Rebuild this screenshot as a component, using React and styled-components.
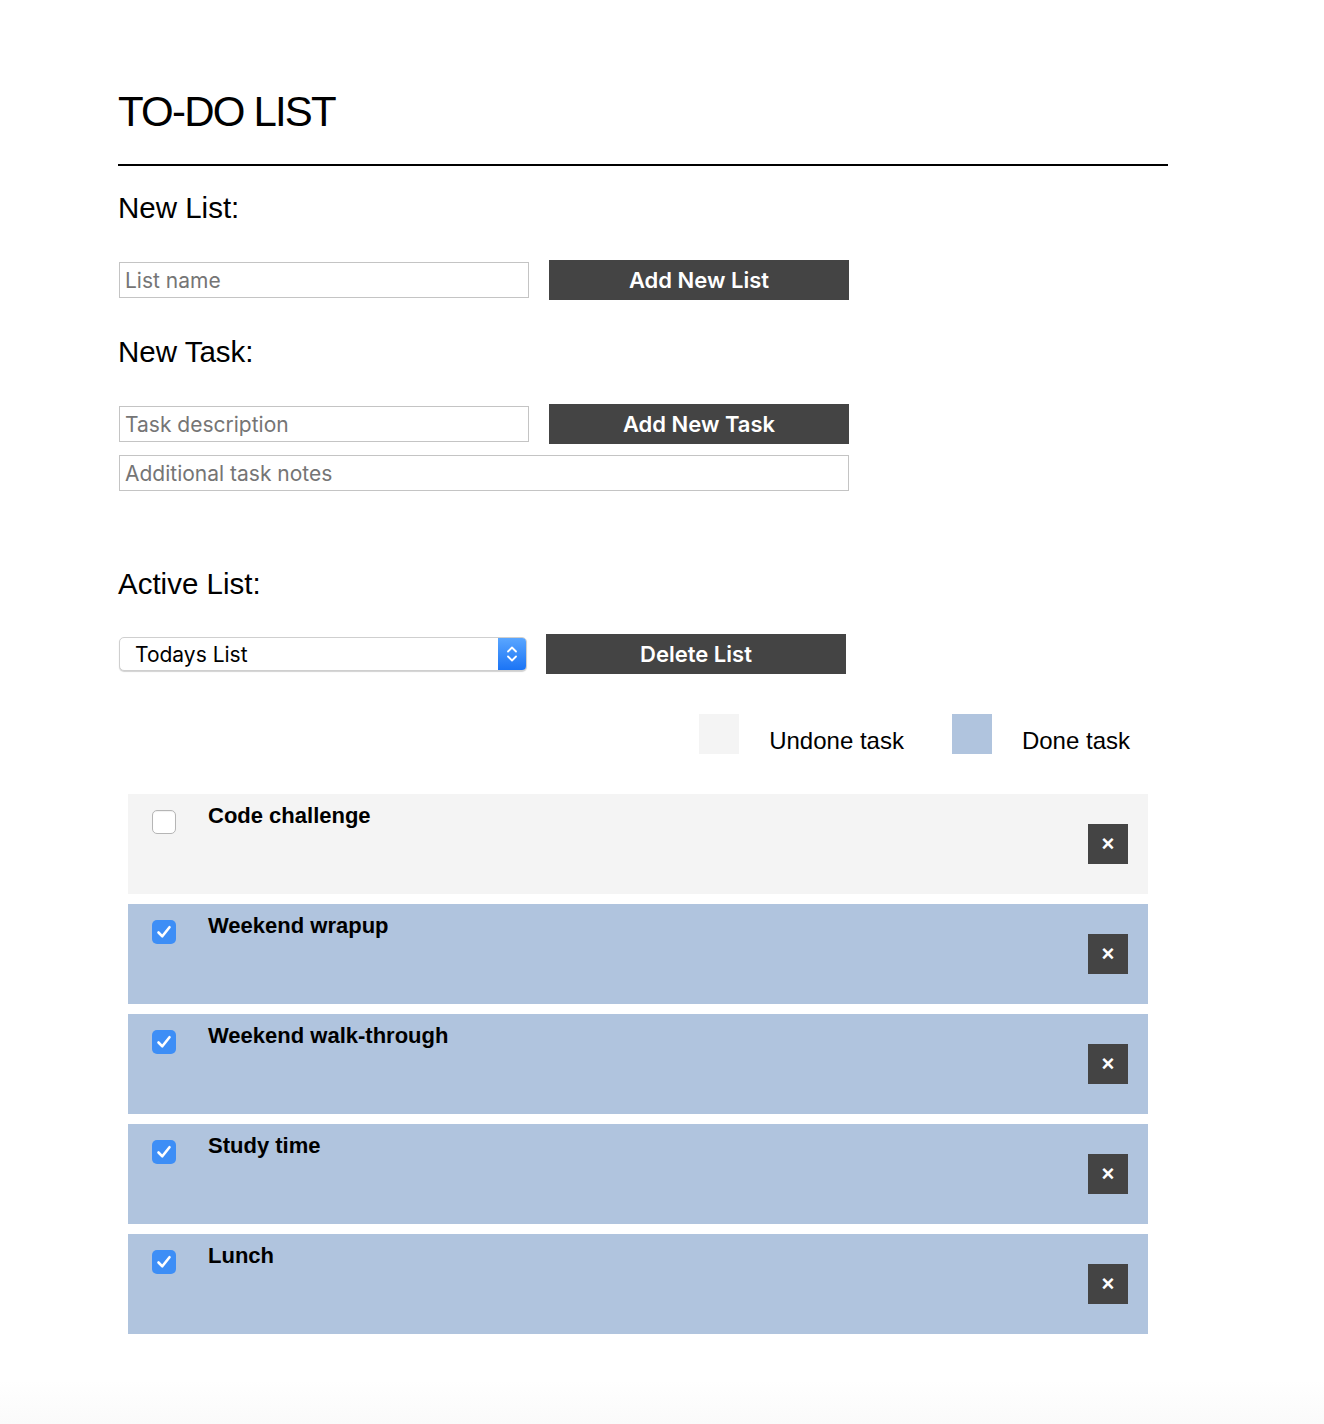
import React from "react";
import styled, { createGlobalStyle } from "styled-components";

const GlobalStyle = createGlobalStyle`
  html {
    min-height: 100%;
    background: linear-gradient(to bottom, #ffffff 1380px, #fafafa 1424px);
  }
  body {
    margin: 0;
    padding: 0;
    font-family: "Liberation Sans", Arial, sans-serif;
    color: #000;
  }
`;

const tasks = [
  { title: "Code challenge", done: false },
  { title: "Weekend wrapup", done: true },
  { title: "Weekend walk-through", done: true },
  { title: "Study time", done: true },
  { title: "Lunch", done: true },
];

export default function App() {
  return (
    <>
      <GlobalStyle />
      <Page>
        <Header>
          <Title>TO-DO LIST</Title>
        </Header>

        <Heading>New List:</Heading>
        <FormRow>
          <TextInput placeholder="List name" />
          <DarkButton>Add New List</DarkButton>
        </FormRow>

        <Heading $top={24}>New Task:</Heading>
        <FormRow>
          <TextInput placeholder="Task description" />
          <DarkButton>Add New Task</DarkButton>
        </FormRow>
        <TextInput $wide placeholder="Additional task notes" />

        <Heading $top={76}>Active List:</Heading>
        <FormRow $gap={19} $top={33}>
          <SelectBox>
            <SelectText>Todays List</SelectText>
            <SelectArrow>
              <svg width="12" height="20" viewBox="0 0 12 20">
                <path
                  d="M2 7.5 L6 3.5 L10 7.5 M2 12.5 L6 16.5 L10 12.5"
                  fill="none"
                  stroke="#fff"
                  strokeWidth="1.8"
                  strokeLinecap="round"
                  strokeLinejoin="round"
                />
              </svg>
            </SelectArrow>
          </SelectBox>
          <DarkButton>Delete List</DarkButton>
        </FormRow>

        <Legend>
          <LegendItem>
            <Swatch $color="#f4f4f4" />
            <LegendText>Undone task</LegendText>
          </LegendItem>
          <LegendItem>
            <Swatch $color="#b0c4de" />
            <LegendText>Done task</LegendText>
          </LegendItem>
        </Legend>

        <TaskList>
          {tasks.map((t) => (
            <TaskRow key={t.title} $done={t.done}>
              <Check $checked={t.done}>
                {t.done && (
                  <svg width="24" height="24" viewBox="0 0 24 24">
                    <path
                      d="M6.5 12.5 L10.3 16.3 L17.5 7.2"
                      fill="none"
                      stroke="#fff"
                      strokeWidth="2.6"
                      strokeLinecap="round"
                      strokeLinejoin="round"
                    />
                  </svg>
                )}
              </Check>
              <TaskTitle>{t.title}</TaskTitle>
              <RemoveButton>×</RemoveButton>
            </TaskRow>
          ))}
        </TaskList>
      </Page>
    </>
  );
}

const Page = styled.div`
  width: 1050px;
  margin-left: 118px;
  padding-bottom: 60px;
  display: flex;
  flex-direction: column;
  align-items: flex-start;
`;

const Header = styled.div`
  width: 100%;
  padding-top: 88px;
  padding-bottom: 28px;
  border-bottom: 2px solid #000;
`;

const Title = styled.h1`
  margin: 0;
  font-size: 42px;
  line-height: 48px;
  font-weight: 400;
  letter-spacing: -1.8px;
`;

const Heading = styled.h2`
  margin: ${(p) => p.$top ?? 25}px 0 0;
  font-size: 29.5px;
  line-height: 34px;
  font-weight: 400;
`;

const FormRow = styled.div`
  display: flex;
  align-items: center;
  gap: ${(p) => p.$gap ?? 20}px;
  margin-top: ${(p) => p.$top ?? 35}px;
  margin-bottom: 11px;
`;

const TextInput = styled.input`
  box-sizing: border-box;
  width: ${(p) => (p.$wide ? 730 : 410)}px;
  height: 36px;
  margin: 0 0 0 1px;
  padding: 0 5px;
  border: 1px solid #c4c4c4;
  border-radius: 0;
  font-family: Inter, Roboto, sans-serif;
  font-size: 21px;
  color: #333;
  outline: none;
  &::placeholder {
    color: #757575;
  }
`;

const DarkButton = styled.button`
  width: 300px;
  height: 40px;
  border: none;
  background: #444444;
  color: #fff;
  font-family: Inter, Roboto, sans-serif;
  font-size: 22px;
  font-weight: 600;
  cursor: pointer;
`;

const SelectBox = styled.div`
  box-sizing: border-box;
  width: 408px;
  height: 34px;
  margin-left: 1px;
  display: flex;
  align-items: stretch;
  background: #fff;
  border: 1px solid #cfcfcf;
  border-radius: 5px;
  box-shadow: 0 1px 1px rgba(0, 0, 0, 0.18);
  overflow: hidden;
`;

const SelectText = styled.div`
  flex: 1;
  display: flex;
  align-items: center;
  padding-left: 15px;
  font-family: Inter, Roboto, sans-serif;
  font-size: 21px;
  color: #000;
`;

const SelectArrow = styled.div`
  width: 28px;
  display: flex;
  align-items: center;
  justify-content: center;
  background: linear-gradient(#5aa6ff, #1b74f5);
`;

const Legend = styled.div`
  align-self: stretch;
  display: flex;
  justify-content: flex-end;
  gap: 48px;
  padding-right: 38px;
  margin-top: 29px;
`;

const LegendItem = styled.div`
  display: flex;
  align-items: flex-end;
  gap: 30px;
`;

const Swatch = styled.div`
  width: 40px;
  height: 40px;
  background: ${(p) => p.$color};
  align-self: flex-start;
`;

const LegendText = styled.span`
  font-size: 24px;
  line-height: 28px;
  margin-bottom: -1px;
`;

const TaskList = styled.div`
  align-self: stretch;
  display: flex;
  flex-direction: column;
  gap: 10px;
  margin: 40px 20px 0 10px;
`;

const TaskRow = styled.div`
  height: 100px;
  box-sizing: border-box;
  display: flex;
  align-items: flex-start;
  padding: 0 20px 0 24px;
  background: ${(p) => (p.$done ? "#b0c4de" : "#f4f4f4")};
`;

const Check = styled.span`
  box-sizing: border-box;
  width: 24px;
  height: 24px;
  margin-top: 16px;
  border-radius: 5px;
  display: flex;
  align-items: center;
  justify-content: center;
  background: ${(p) => (p.$checked ? "#3d8ef6" : "#fff")};
  border: ${(p) => (p.$checked ? "none" : "1px solid #b5b5b5")};
  box-shadow: ${(p) => (p.$checked ? "none" : "inset 0 1px 1px rgba(0,0,0,0.06)")};
`;

const TaskTitle = styled.div`
  flex: 1;
  margin: 9px 0 0 32px;
  font-size: 22px;
  line-height: 26px;
  font-weight: 700;
`;

const RemoveButton = styled.button`
  align-self: center;
  width: 40px;
  height: 40px;
  padding: 0;
  border: none;
  background: #444444;
  color: #fff;
  font-family: "Liberation Sans", Arial, sans-serif;
  font-size: 22px;
  font-weight: 700;
  line-height: 40px;
  cursor: pointer;
`;
